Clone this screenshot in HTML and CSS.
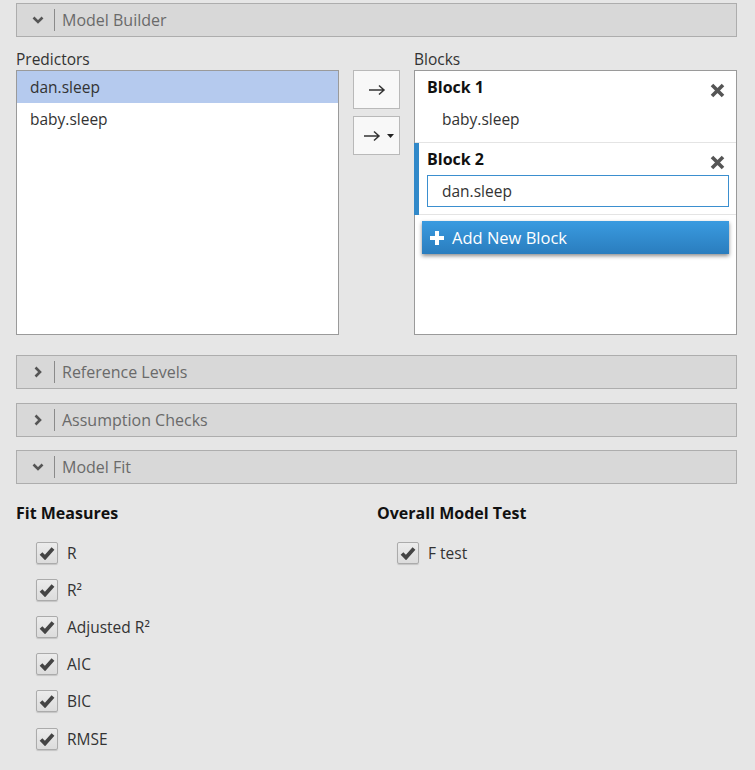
FILE: index.html
```html
<!DOCTYPE html>
<html>
<head>
<meta charset="utf-8">
<link rel="stylesheet" href="styles.css">
</head>
<body>
<div class="page">
  <div class="sec-header">
    <svg class="chev" width="12" height="8" viewBox="0 0 12 8"><path d="M1.5 1.5 L6 6 L10.5 1.5" fill="none" stroke="#555" stroke-width="2.6"/></svg>
    <span class="sep"></span>
    <span class="sec-title">Model Builder</span>
  </div>

  <div class="builder">
    <div class="col">
      <div class="label">Predictors</div>
      <div class="listbox">
        <div class="row selected">dan.sleep</div>
        <div class="row">baby.sleep</div>
      </div>
    </div>
    <div class="buttons">
      <div class="arrow-btn">
        <svg width="18" height="12" viewBox="0 0 18 12"><path d="M1 6 H16 M11 1.5 L16 6 L11 10.5" fill="none" stroke="#333" stroke-width="1.5"/></svg>
      </div>
      <div class="arrow-btn split">
        <svg width="18" height="12" viewBox="0 0 18 12"><path d="M1 6 H16 M11 1.5 L16 6 L11 10.5" fill="none" stroke="#333" stroke-width="1.5"/></svg>
        <svg class="caret" width="7" height="4" viewBox="0 0 7 4"><path d="M0 0 H7 L3.5 4 Z" fill="#222"/></svg>
      </div>
    </div>
    <div class="col">
      <div class="label">Blocks</div>
      <div class="listbox blocks">
        <div class="block">
          <div class="block-head">
            <span class="block-title">Block 1</span>
            <svg class="close" width="15" height="15" viewBox="0 0 15 15"><path d="M2 2 L13 13 M13 2 L2 13" stroke="#555" stroke-width="3.6"/></svg>
          </div>
          <div class="block-item">baby.sleep</div>
        </div>
        <div class="block active">
          <div class="block-head">
            <span class="block-title">Block 2</span>
            <svg class="close" width="15" height="15" viewBox="0 0 15 15"><path d="M2 2 L13 13 M13 2 L2 13" stroke="#555" stroke-width="3.6"/></svg>
          </div>
          <div class="block-item input">dan.sleep</div>
        </div>
        <div class="add-btn">
          <svg width="16" height="16" viewBox="0 0 16 16"><path d="M8 1 V15 M1 8 H15" stroke="#fff" stroke-width="4"/></svg>
          <span>Add New Block</span>
        </div>
      </div>
    </div>
  </div>

  <div class="sec-header mt-first">
    <svg class="chev" width="8" height="12" viewBox="0 0 8 12"><path d="M1.5 1.5 L6 6 L1.5 10.5" fill="none" stroke="#555" stroke-width="2.6"/></svg>
    <span class="sep"></span>
    <span class="sec-title">Reference Levels</span>
  </div>
  <div class="sec-header mt">
    <svg class="chev" width="8" height="12" viewBox="0 0 8 12"><path d="M1.5 1.5 L6 6 L1.5 10.5" fill="none" stroke="#555" stroke-width="2.6"/></svg>
    <span class="sep"></span>
    <span class="sec-title">Assumption Checks</span>
  </div>
  <div class="sec-header mt2">
    <svg class="chev" width="12" height="8" viewBox="0 0 12 8"><path d="M1.5 1.5 L6 6 L10.5 1.5" fill="none" stroke="#555" stroke-width="2.6"/></svg>
    <span class="sep"></span>
    <span class="sec-title">Model Fit</span>
  </div>

  <div class="fit">
    <div class="fit-col">
      <div class="group-title">Fit Measures</div>
      <div class="check-row"><span class="cb"><svg width="16" height="14" viewBox="0 0 16 14"><path d="M2 7.5 L6 11.5 L14 2.5" fill="none" stroke="#444" stroke-width="3.8"/></svg></span><span>R</span></div>
      <div class="check-row"><span class="cb"><svg width="16" height="14" viewBox="0 0 16 14"><path d="M2 7.5 L6 11.5 L14 2.5" fill="none" stroke="#444" stroke-width="3.8"/></svg></span><span>R²</span></div>
      <div class="check-row"><span class="cb"><svg width="16" height="14" viewBox="0 0 16 14"><path d="M2 7.5 L6 11.5 L14 2.5" fill="none" stroke="#444" stroke-width="3.8"/></svg></span><span>Adjusted R²</span></div>
      <div class="check-row"><span class="cb"><svg width="16" height="14" viewBox="0 0 16 14"><path d="M2 7.5 L6 11.5 L14 2.5" fill="none" stroke="#444" stroke-width="3.8"/></svg></span><span>AIC</span></div>
      <div class="check-row"><span class="cb"><svg width="16" height="14" viewBox="0 0 16 14"><path d="M2 7.5 L6 11.5 L14 2.5" fill="none" stroke="#444" stroke-width="3.8"/></svg></span><span>BIC</span></div>
      <div class="check-row"><span class="cb"><svg width="16" height="14" viewBox="0 0 16 14"><path d="M2 7.5 L6 11.5 L14 2.5" fill="none" stroke="#444" stroke-width="3.8"/></svg></span><span>RMSE</span></div>
    </div>
    <div class="fit-col">
      <div class="group-title">Overall Model Test</div>
      <div class="check-row"><span class="cb"><svg width="16" height="14" viewBox="0 0 16 14"><path d="M2 7.5 L6 11.5 L14 2.5" fill="none" stroke="#444" stroke-width="3.8"/></svg></span><span>F test</span></div>
    </div>
  </div>
</div>
</body>
</html>
```

FILE: styles.css
```css
* { box-sizing: border-box; }
html, body { margin: 0; padding: 0; }
body {
  background: #e6e6e6;
  font-family: "Open Sans", "Noto Sans", sans-serif;
  font-size: 15.5px;
  color: #333;
}
.page {
  width: 755px;
  padding: 3px 18px 0 16px;
}
.sec-header {
  height: 34px;
  background: #d8d8d8;
  border: 1px solid #adadad;
  display: flex;
  align-items: center;
  padding-left: 15px;
}
.sec-header .chev { width: 12px; flex: none; }
.sec-header .sep {
  width: 1px;
  height: 22px;
  background: #8a8a8a;
  margin: 0 7px 0 10px;
}
.sec-title { color: #6a6a6a; font-size: 16px; }
.mt-first { margin-top: 20px; }
.mt { margin-top: 14px; }
.mt2 { margin-top: 13px; }

.builder {
  display: grid;
  grid-template-columns: 323px 47px 323px;
  column-gap: 14px;
  margin-top: 12px;
}
.label { height: 21px; line-height: 21px; color: #333; }
.listbox {
  height: 265px;
  background: #fff;
  border: 1px solid #9a9a9a;
}
.row {
  height: 32px;
  line-height: 32px;
  padding-left: 13px;
  color: #333;
}
.row.selected { background: #b5caee; }
.buttons {
  padding-top: 21px;
  display: flex;
  flex-direction: column;
  gap: 7px;
}
.arrow-btn {
  height: 39px;
  background: #f8f8f8;
  border: 1px solid #b9b9b9;
  display: flex;
  align-items: center;
  justify-content: center;
}
.arrow-btn.split { padding-left: 4px; }
.arrow-btn .caret { margin-left: 6px; margin-top: 1px; }

.block {
  position: relative;
  height: 72px;
  padding: 5px 7px 0 12px;
  border-bottom: 1px solid #e4e4e4;
}
.block.active::before {
  content: "";
  position: absolute;
  left: -1px;
  top: 0;
  bottom: -1px;
  width: 5px;
  background: #3189c9;
}
.block-head {
  height: 22px;
  display: flex;
  justify-content: space-between;
}
.block-title { font-weight: 700; color: #111; line-height: 22px; font-size: 16px; }
.close { margin-top: 7px; margin-right: 4px; }
.block-item {
  margin-top: 5px;
  height: 32px;
  line-height: 30px;
  padding-left: 14px;
  border: 1px solid transparent;
  color: #333;
}
.block-item.input { border-color: #3b8fcf; }

.add-btn {
  margin: 6px 7px 0 7px;
  height: 33px;
  background: linear-gradient(#3a9be0, #2a7dbe);
  box-shadow: 0 2px 4px rgba(0,0,0,0.45);
  color: #fff;
  font-size: 16.5px;
  display: flex;
  align-items: center;
  padding-left: 7px;
  gap: 7px;
}

.fit {
  display: grid;
  grid-template-columns: 361px 1fr;
  padding-top: 18px;
}
.group-title {
  font-weight: 700;
  color: #111;
  font-size: 16px;
  height: 22px;
  line-height: 22px;
  margin-bottom: 10px;
}
.check-row {
  height: 37.2px;
  display: flex;
  align-items: center;
  padding-left: 20px;
  gap: 9px;
  color: #333;
}
.cb {
  width: 22px;
  height: 22px;
  border: 1px solid #ababab;
  border-radius: 2px;
  background: linear-gradient(#ececec, #dcdcdc);
  box-shadow: 0 1px 1px rgba(0,0,0,0.15);
  display: flex;
  align-items: center;
  justify-content: center;
}
```
